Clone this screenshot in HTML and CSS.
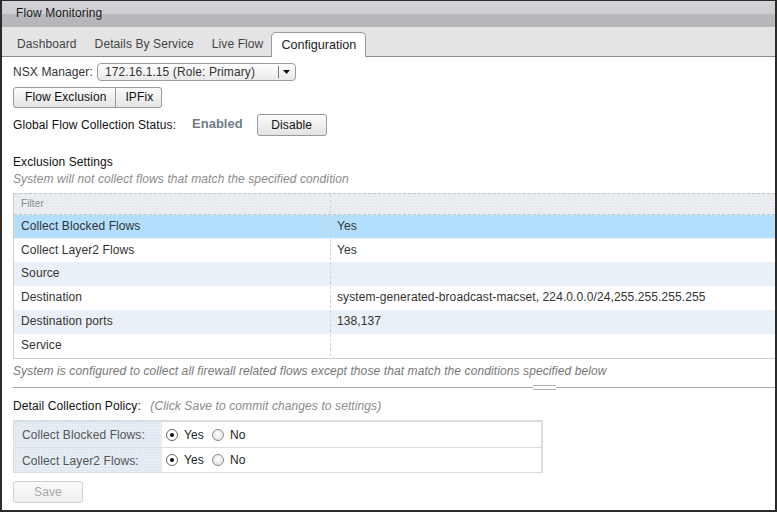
FILE: index.html
```html
<!DOCTYPE html>
<html>
<head>
<meta charset="utf-8">
<link rel="stylesheet" href="styles.css">
</head>
<body>
<div class="window">
  <div class="titlebar">Flow Monitoring</div>
  <div class="tabs">
    <div class="tab">Dashboard</div>
    <div class="tab">Details By Service</div>
    <div class="tab">Live Flow</div>
    <div class="tab active">Configuration</div>
  </div>
  <div class="content">
    <div class="manager-row">
      <span class="manager-label">NSX Manager:</span>
      <div class="select">
        <span class="select-text">172.16.1.15 (Role: Primary)</span>
        <span class="select-btn"><svg width="7" height="4" viewBox="0 0 7 4"><path d="M0 0h7L3.5 4z" fill="#111"/></svg></span>
      </div>
    </div>
    <div class="btn-group"><span class="seg">Flow Exclusion</span><span class="seg seg-last">IPFix</span></div>
    <div class="status-row">
      <span class="status-label">Global Flow Collection Status:</span>
      <span class="status-value">Enabled</span>
      <span class="btn">Disable</span>
    </div>
    <div class="section-title">Exclusion Settings</div>
    <div class="section-desc">System will not collect flows that match the specified condition</div>
    <div class="grid">
      <div class="grid-head"><div class="c1">Filter</div><div class="c2"></div></div>
      <div class="grid-row selected"><div class="c1">Collect Blocked Flows</div><div class="c2">Yes</div></div>
      <div class="grid-row"><div class="c1">Collect Layer2 Flows</div><div class="c2">Yes</div></div>
      <div class="grid-row alt"><div class="c1">Source</div><div class="c2"></div></div>
      <div class="grid-row"><div class="c1">Destination</div><div class="c2">system-generated-broadcast-macset, 224.0.0.0/24,255.255.255.255</div></div>
      <div class="grid-row alt"><div class="c1">Destination ports</div><div class="c2">138,137</div></div>
      <div class="grid-row"><div class="c1">Service</div><div class="c2"></div></div>
    </div>
    <div class="note">System is configured to collect all firewall related flows except those that match the conditions specified below</div>
    <div class="splitter"><span class="grip"></span></div>
    <div class="policy-title">Detail Collection Policy: <span class="policy-hint">(Click Save to commit changes to settings)</span></div>
    <div class="policy">
      <div class="policy-row">
        <div class="policy-label">Collect Blocked Flows:</div>
        <div class="policy-opts">
          <span class="radio checked"></span><span class="opt">Yes</span>
          <span class="radio"></span><span class="opt">No</span>
        </div>
      </div>
      <div class="policy-row">
        <div class="policy-label">Collect Layer2 Flows:</div>
        <div class="policy-opts">
          <span class="radio checked"></span><span class="opt">Yes</span>
          <span class="radio"></span><span class="opt">No</span>
        </div>
      </div>
    </div>
    <div class="save-row"><span class="btn btn-disabled">Save</span></div>
  </div>
</div>
</body>
</html>
```

FILE: styles.css
```css
* { box-sizing: border-box; }
html, body { margin: 0; padding: 0; background: #fff; }
body {
  font-family: "Liberation Sans", Arial, sans-serif;
  font-size: 12px;
  letter-spacing: 0.1px;
  color: #333;
}
.window {
  width: 777px;
  height: 512px;
  border: 2px solid #2b2b2b;
  border-top-width: 1px;
  overflow: hidden;
  background: #fff;
}
.titlebar {
  height: 26px;
  line-height: 25px;
  padding-left: 14px;
  color: #1a1a1a;
  background: linear-gradient(#d2d3d7 0%, #cdced2 48%, #b7b9bc 52%, #b3b5b8 100%);
}
.tabs {
  height: 30px;
  display: flex;
  align-items: flex-end;
  padding-left: 6px;
  background: #e4e4e4;
  border-bottom: 1px solid #8c8c8c;
}
.tab {
  padding: 2px 9px 0;
  line-height: 24px;
  color: #444;
}
.tab.active {
  font-size: 12.6px;
  letter-spacing: 0;
  color: #222;
  background: #fff;
  border: 1px solid #9a9a9a;
  border-bottom: none;
  border-radius: 5px 5px 0 0;
  height: 25px;
  line-height: 24px;
  padding: 0 9px;
  margin-bottom: -1px;
  margin-left: -1px;
}
.content {
  padding-left: 11px;
}
.manager-row {
  display: flex;
  align-items: center;
  margin-top: 6px;
  height: 18px;
}
.manager-label { color: #333; margin-right: 4px; }
.select {
  width: 199px;
  height: 18px;
  border: 1px solid #9c9c9c;
  border-radius: 4px;
  background: linear-gradient(#ffffff, #e9e9e9);
  display: flex;
  align-items: center;
}
.select-text {
  flex: 1;
  padding-left: 7px;
  color: #333;
}
.select-btn {
  width: 17px;
  height: 12px;
  border-left: 1px solid #777;
  display: flex;
  align-items: center;
  justify-content: center;
}
.btn-group {
  display: inline-flex;
  margin-top: 6px;
  height: 21px;
  border: 1px solid #9a9a9a;
  border-radius: 3px;
  background: linear-gradient(#fbfbfb, #e4e4e4);
}
.seg {
  line-height: 19px;
  padding: 0 9px 0 11px;
  color: #111;
}
.seg-last {
  border-left: 1px solid #9a9a9a;
  padding: 0 8px 0 9px;
}
.status-row {
  display: flex;
  align-items: center;
  margin-top: 6px;
  height: 22px;
}
.status-label { color: #111; }
.status-value {
  margin-left: 16px;
  font-size: 13px;
  font-weight: bold;
  letter-spacing: 0;
  color: #6f7d88;
  padding-bottom: 3px;
}
.btn {
  display: inline-block;
  border: 1px solid #999;
  border-radius: 3px;
  background: linear-gradient(#fbfbfb, #e3e3e3);
  color: #111;
  text-align: center;
}
.status-row .btn {
  margin-left: 14px;
  width: 70px;
  height: 22px;
  line-height: 20px;
}
.section-title {
  margin-top: 18px;
  line-height: 16px;
  color: #111;
}
.section-desc {
  line-height: 18px;
  font-style: italic;
  color: #8a8a8a;
}
.grid {
  margin-top: 5px;
  border-left: 1px solid #cfcfcf;
  border-bottom: 1px solid #cfcfcf;
}
.grid-head, .grid-row {
  display: flex;
}
.grid-head {
  height: 22px;
  border-top: 1px dashed #c4c8cc;
  border-bottom: 1px dashed #c4c8cc;
  background-color: #e8ecf0;
  background-image: radial-gradient(circle, #f3f5f7 0.6px, transparent 0.8px);
  background-size: 3px 3px;
}
.grid-head .c1 {
  font-size: 10px;
  color: #8a8a8a;
  line-height: 20px;
}
.c1 {
  width: 317px;
  padding-left: 7px;
  border-right: 1px dashed #d2d2d2;
}
.c2 {
  flex: 1;
  padding-left: 6px;
}
.grid-row {
  height: 24px;
  line-height: 22px;
  padding-bottom: 2px;
  color: #333;
}
.grid-row.selected { background: #b3dffc; border-bottom: 1px solid #e6f4fe; }
.grid-row.selected + .grid-row { height: 23px; }
.grid-row.alt { background: #eaf0f7; }
.note {
  margin-top: 3px;
  line-height: 18px;
  font-style: italic;
  color: #777;
}
.splitter {
  position: relative;
  margin-top: 7px;
  height: 1px;
  background: #acacac;
}
.grip {
  position: absolute;
  left: 520px;
  top: -2px;
  width: 23px;
  height: 5px;
  border-top: 1px solid #b0b0b0;
  border-bottom: 1px solid #b0b0b0;
  background: #fff;
}
.policy-title {
  margin-top: 10px;
  line-height: 16px;
  color: #111;
}
.policy-hint {
  margin-left: 6px;
  font-style: italic;
  color: #8a8a8a;
}
.policy {
  margin-top: 6px;
  width: 530px;
  border: 1px solid #dcdcdc;
  border-top-width: 2px;
  border-right-width: 2px;
}
.policy-row {
  display: flex;
  height: 25px;
}
.policy-row + .policy-row {
  border-top: 1px solid #dcdcdc;
}
.policy-label {
  width: 148px;
  padding-left: 8px;
  line-height: 27px;
  color: #555;
  background-color: #e4ecf4;
  background-image: radial-gradient(circle, #d2e0ee 0.6px, transparent 0.8px);
  background-size: 3px 3px;
}
.policy-opts {
  display: flex;
  align-items: center;
  padding-left: 4px;
}
.radio {
  width: 12px;
  height: 12px;
  border: 1px solid #8a8a8a;
  border-radius: 50%;
  background: radial-gradient(circle at 50% 40%, #ffffff, #dcdcdc);
  display: inline-flex;
  align-items: center;
  justify-content: center;
}
.radio.checked {
  border-color: #666;
  background: #fff;
}
.radio.checked::after {
  content: "";
  width: 4px;
  height: 4px;
  border-radius: 50%;
  background: #111;
}
.opt {
  margin-left: 6px;
  margin-right: 8px;
  color: #222;
}
.save-row {
  margin-top: 8px;
}
.btn.btn-disabled {
  width: 70px;
  height: 22px;
  line-height: 20px;
  border-color: #cfcfcf;
  color: #a8a8a8;
  background: linear-gradient(#fafafa, #f0f0f0);
}
```
